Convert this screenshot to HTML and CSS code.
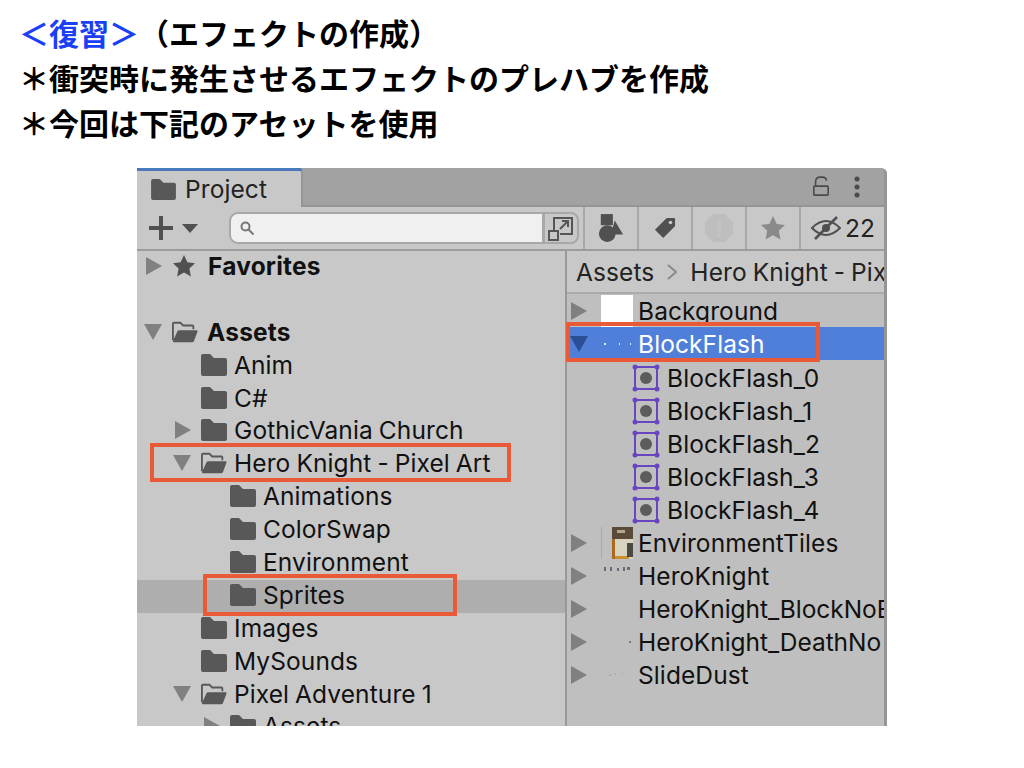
FILE: index.html
```html
<!DOCTYPE html>
<html lang="ja">
<head>
    <meta charset="UTF-8">
    <title>復習 エフェクトの作成</title>
    <link rel="stylesheet" href="styles.css">
</head>
<body>
    <!-- Shared icons -->
    <svg class="defs" width="0" height="0">
        <symbol id="folder" viewBox="0 0 26 22"><path d="M0 2q0-2 2-2h7l4 4h11q2 0 2 2v14q0 2-2 2H2q-2 0-2-2z" fill="#585858"/></symbol>
        <symbol id="folderOpen" viewBox="0 0 28 22"><path d="M1 20V2q0-1 1-1h7l3 3h10q1 0 1 1v3" fill="none" stroke="#585858" stroke-width="2"/><path d="M1 21l5-11q.5-1 2-1h18q2 0 1.500 1.500L24 20q-.5 2-2 2H2q-1 0-1-1z" fill="#585858"/></symbol>
        <symbol id="right" viewBox="0 0 16 18"><path d="M0 0l16 9-16 9z"/></symbol>
        <symbol id="down" viewBox="0 0 18 16"><path d="M0 0h18L9 16z"/></symbol>
        <symbol id="sprite" viewBox="0 0 28 28"><rect x="3" y="3" width="22" height="22" fill="none" stroke="#6a45c0" stroke-width="2"/><g fill="#6a45c0"><circle cx="3" cy="3" r="2.500"/><circle cx="25" cy="3" r="2.500"/><circle cx="3" cy="25" r="2.500"/><circle cx="25" cy="25" r="2.500"/></g><circle cx="14" cy="14" r="6" fill="#5c5c5c"/></symbol>
    </svg>

    <div class="heading">
        <p><span class="accent">＜復習＞</span>（エフェクトの作成）</p>
        <p>＊衝突時に発生させるエフェクトのプレハブを作成</p>
        <p>＊今回は下記のアセットを使用</p>
    </div>

    <div class="window">
        <!-- Tab bar -->
        <div class="tabbar">
            <div class="tab">
                <svg class="tab-icon"><use href="#folder"/></svg>
                <span>Project</span>
            </div>
            <div class="tabbar-tools">
                <svg width="18" height="22" viewBox="0 0 20 24"><path d="M4 10V6q0-5 5-5h2q5 0 5 4" fill="none" stroke="#4a4a4a" stroke-width="1.800"/><rect x="2" y="11" width="16" height="10" rx="1" fill="none" stroke="#4a4a4a" stroke-width="1.800"/></svg>
                <svg width="6" height="22" viewBox="0 0 6 22"><g fill="#4a4a4a"><circle cx="3" cy="3" r="2.500"/><circle cx="3" cy="11" r="2.500"/><circle cx="3" cy="19" r="2.500"/></g></svg>
            </div>
        </div>

        <!-- Toolbar -->
        <div class="toolbar">
            <div class="create">
                <svg width="26" height="26" viewBox="0 0 26 26"><path d="M13 1v24M1 13h24" stroke="#505050" stroke-width="4"/></svg>
                <svg width="16" height="9" viewBox="0 0 16 9"><path d="M0 0h16L8 9z" fill="#505050"/></svg>
            </div>
            <div class="search">
                <svg width="16" height="16" viewBox="0 0 16 16"><circle cx="6.500" cy="6.500" r="4" fill="none" stroke="#777" stroke-width="2"/><path d="M9.500 9.500l5 5" stroke="#777" stroke-width="2"/></svg>
            </div>
            <div class="search-btn">
                <svg width="26" height="26" viewBox="0 0 26 26"><path d="M6 16V3h18v16H12" fill="none" stroke="#555" stroke-width="2"/><rect x="1" y="16" width="9" height="9" fill="none" stroke="#555" stroke-width="2"/><path d="M12 14l8-8M14 6h6v6" fill="none" stroke="#555" stroke-width="2"/></svg>
            </div>
            <div class="tool">
                <svg width="26" height="30" viewBox="0 0 28 32"><rect x="3" y="1" width="13" height="12" fill="#505050"/><path d="M18 8l9 15H14z" fill="#505050"/><circle cx="10" cy="22" r="9" fill="#505050"/></svg>
            </div>
            <div class="tool">
                <svg width="22" height="22" viewBox="0 0 24 24"><path d="M1 14L13 2q1-1 2-1h7q1 0 1 1v7q0 1-1 2L10 23z" fill="#505050"/><circle cx="18" cy="6" r="2" fill="#c8c8c8"/></svg>
            </div>
            <div class="tool">
                <svg width="28" height="28" viewBox="0 0 28 28"><path d="M8 0h12l8 8v12l-8 8H8l-8-8V8z" fill="#bebebe"/><rect x="12" y="6" width="4" height="11" fill="#c3c3c3"/><rect x="12" y="19" width="4" height="4" fill="#c3c3c3"/></svg>
            </div>
            <div class="tool">
                <svg width="26" height="26" viewBox="0 0 24 24"><path d="M12 1l3.400 7.300 7.600.9-5.600 5.400 1.500 8L12 18.600 5.100 22.600l1.500-8L1 9.200l7.600-.9z" fill="#8a8a8a"/></svg>
            </div>
            <div class="tool tool-last">
                <svg width="30" height="26" viewBox="0 0 30 26"><path d="M1 13q14-14 28 0-14 14-28 0z" fill="none" stroke="#505050" stroke-width="2"/><circle cx="15" cy="13" r="4" fill="#505050"/><path d="M4 24L26 2" stroke="#505050" stroke-width="2.500"/></svg>
                <span>22</span>
            </div>
        </div>

        <div class="panes">
            <!-- Folder tree -->
            <div class="tree">
                <div class="row lvl0"><svg class="arrow"><use href="#right"/></svg><svg class="star" viewBox="0 0 24 24"><path d="M12 1l3.400 7.300 7.600.9-5.600 5.400 1.500 8L12 18.600 5.100 22.600l1.500-8L1 9.200l7.600-.9z" fill="#505050"/></svg><strong>Favorites</strong></div>
                <div class="row"></div>
                <div class="row lvl0"><svg class="arrow arrow-down"><use href="#down"/></svg><svg class="icon"><use href="#folderOpen"/></svg><strong>Assets</strong></div>
                <div class="row lvl1"><span class="arrow"></span><svg class="icon"><use href="#folder"/></svg>Anim</div>
                <div class="row lvl1"><span class="arrow"></span><svg class="icon"><use href="#folder"/></svg>C#</div>
                <div class="row lvl1"><svg class="arrow"><use href="#right"/></svg><svg class="icon"><use href="#folder"/></svg>GothicVania Church</div>
                <div class="row lvl1"><svg class="arrow arrow-down"><use href="#down"/></svg><svg class="icon"><use href="#folderOpen"/></svg>Hero Knight - Pixel Art</div>
                <div class="row lvl2"><span class="arrow"></span><svg class="icon"><use href="#folder"/></svg>Animations</div>
                <div class="row lvl2"><span class="arrow"></span><svg class="icon"><use href="#folder"/></svg>ColorSwap</div>
                <div class="row lvl2"><span class="arrow"></span><svg class="icon"><use href="#folder"/></svg>Environment</div>
                <div class="row lvl2 row-current"><span class="arrow"></span><svg class="icon"><use href="#folder"/></svg>Sprites</div>
                <div class="row lvl1"><span class="arrow"></span><svg class="icon"><use href="#folder"/></svg>Images</div>
                <div class="row lvl1"><span class="arrow"></span><svg class="icon"><use href="#folder"/></svg>MySounds</div>
                <div class="row lvl1"><svg class="arrow arrow-down"><use href="#down"/></svg><svg class="icon"><use href="#folderOpen"/></svg>Pixel Adventure 1</div>
                <div class="row lvl2"><svg class="arrow"><use href="#right"/></svg><svg class="icon"><use href="#folder"/></svg>Assets</div>
            </div>

            <!-- Asset list -->
            <div class="assets">
                <div class="crumbs">
                    <span>Assets</span>
                    <svg width="12" height="18" viewBox="0 0 12 18"><path d="M2 2l8 7-8 7" fill="none" stroke="#8a8a8a" stroke-width="2"/></svg>
                    <span>Hero Knight - Pix</span>
                </div>
                <div class="asset-row asset-first"><svg class="arrow"><use href="#right"/></svg><span class="thumb thumb-white"></span><span>Background</span></div>
                <div class="asset-row asset-selected"><svg class="arrow arrow-selected"><use href="#down"/></svg><svg class="thumb" viewBox="0 0 32 32"><g fill="#dfe8fa"><rect x="3" y="15" width="2" height="2"/><rect x="18" y="15" width="1" height="2"/><rect x="29" y="15" width="1" height="2"/></g></svg><span>BlockFlash</span></div>
                <div class="asset-row asset-sub"><svg class="sprite"><use href="#sprite"/></svg><span>BlockFlash_0</span></div>
                <div class="asset-row asset-sub"><svg class="sprite"><use href="#sprite"/></svg><span>BlockFlash_1</span></div>
                <div class="asset-row asset-sub"><svg class="sprite"><use href="#sprite"/></svg><span>BlockFlash_2</span></div>
                <div class="asset-row asset-sub"><svg class="sprite"><use href="#sprite"/></svg><span>BlockFlash_3</span></div>
                <div class="asset-row asset-sub"><svg class="sprite"><use href="#sprite"/></svg><span>BlockFlash_4</span></div>
                <div class="asset-row"><svg class="arrow"><use href="#right"/></svg><svg class="thumb" viewBox="0 0 32 32"><rect x="0" y="0" width="1" height="32" fill="#aaa"/><rect x="11" y="0" width="21" height="12" fill="#5a4a38"/><rect x="11" y="12" width="21" height="20" fill="#d8d2c0"/><rect x="11" y="12" width="3" height="20" fill="#a86a1c"/><rect x="14" y="29" width="14" height="3" fill="#c89030"/><rect x="26" y="16" width="6" height="14" fill="#4a4a40"/><rect x="16" y="3" width="8" height="3" fill="#b0a890"/></svg><span>EnvironmentTiles</span></div>
                <div class="asset-row"><svg class="arrow"><use href="#right"/></svg><svg class="thumb" viewBox="0 0 32 32"><g fill="#6a6a78"><rect x="3" y="7" width="2" height="4"/><rect x="9" y="7" width="2" height="4"/><rect x="16" y="8" width="2" height="3"/><rect x="22" y="7" width="2" height="4"/><rect x="26" y="7" width="3" height="3"/></g></svg><span>HeroKnight</span></div>
                <div class="asset-row"><svg class="arrow"><use href="#right"/></svg><span class="thumb"></span><span class="long-name">HeroKnight_BlockNoE</span></div>
                <div class="asset-row"><svg class="arrow"><use href="#right"/></svg><svg class="thumb" viewBox="0 0 32 32"><rect x="28" y="15" width="2" height="2" fill="#777"/></svg><span class="long-name">HeroKnight_DeathNo</span></div>
                <div class="asset-row"><svg class="arrow"><use href="#right"/></svg><svg class="thumb" viewBox="0 0 32 32"><g fill="#a8a8b8"><rect x="8" y="15" width="2" height="2"/><rect x="14" y="14" width="1" height="2"/><rect x="20" y="14" width="2" height="1"/></g></svg><span>SlideDust</span></div>
            </div>
        </div>

        <!-- Red annotation boxes -->
        <div class="mark mark-hero"></div>
        <div class="mark mark-sprites"></div>
        <div class="mark mark-flash"></div>
    </div>
</body>
</html>
```

FILE: styles.css
```css
/* General */
body {
    margin: 0;
    width: 1024px;
    height: 768px;
    overflow: hidden;
    background: #fff;
    color: #000;
    font-family: 'Noto Sans CJK JP', sans-serif;
}

.defs {
    position: absolute;
}

/* Heading text */
.heading {
    padding: 10px 0 0 19px;
    height: 168px;
    box-sizing: border-box;
    font-size: 30px;
    font-weight: 700;
    line-height: 45px;
}

.heading p {
    margin: 0;
    white-space: nowrap;
}

.accent {
    color: #1a3ff5;
}

/* Unity window */
.window {
    position: relative;
    width: 750px;
    height: 558px;
    overflow: hidden;
    margin-left: 137px;
    background: #c8c8c8;
    color: #111;
    font-family: 'Inter', sans-serif;
    font-size: 24.5px;
    letter-spacing: 0.1px;
    word-spacing: -1px;
    border-top-right-radius: 6px;
}

/* Tab bar */
.tabbar {
    display: flex;
    justify-content: space-between;
    height: 39px;
    box-sizing: border-box;
    background: #a2a2a2;
    border-bottom: 2px solid #959595;
    border-right: 3px solid #959595;
}

.tab {
    display: flex;
    align-items: center;
    gap: 9px;
    width: 166px;
    height: 39px;
    box-sizing: border-box;
    padding-left: 14px;
    background: #c8c8c8;
    border-top: 3px solid #4a78bd;
    border-right: 2px solid #959595;
    border-top-right-radius: 4px;
    color: #222;
}

.tab-icon {
    width: 25px;
    height: 21px;
}

.tabbar-tools {
    display: flex;
    align-items: center;
    gap: 24px;
    padding-right: 24px;
}

/* Toolbar */
.toolbar {
    display: flex;
    align-items: stretch;
    height: 44px;
    box-sizing: border-box;
    border-bottom: 2px solid #9c9c9c;
    border-right: 3px solid #959595;
}

.create {
    display: flex;
    align-items: center;
    gap: 8px;
    width: 92px;
    padding-left: 11px;
    box-sizing: border-box;
}

.search {
    display: flex;
    align-items: center;
    width: 314px;
    height: 32px;
    margin-top: 5px;
    padding-left: 8px;
    box-sizing: border-box;
    background: #f0f0f0;
    border: 2px solid #a8a8a8;
    border-right-width: 1px;
    border-radius: 9px 0 0 9px;
}

.search-btn {
    display: flex;
    align-items: center;
    justify-content: center;
    width: 36px;
    height: 32px;
    margin-top: 5px;
    box-sizing: border-box;
    border: 2px solid #a8a8a8;
    border-radius: 0 8px 8px 0;
}

.tool {
    display: flex;
    align-items: center;
    justify-content: center;
    width: 54px;
    box-sizing: border-box;
    border-left: 2px solid #a8a8a8;
}

.search-btn + .tool {
    margin-left: 4px;
}

.tool-last {
    flex: 1;
    justify-content: flex-end;
    gap: 4px;
    padding-right: 9px;
    color: #222;
}

/* Panes */
.panes {
    display: flex;
    height: 475px;
}

.tree {
    width: 428px;
    flex-shrink: 0;
    overflow: hidden;
    border-right: 2px solid #999;
}

.row {
    display: flex;
    align-items: center;
    height: 32.9px;
    box-sizing: border-box;
    padding-bottom: 3px;
    white-space: nowrap;
}

.row strong {
    font-weight: 700;
    letter-spacing: 0.2px;
}

.lvl0 { padding-left: 9px; }
.lvl1 { padding-left: 38px; }
.lvl2 { padding-left: 67px; }

.lvl0 .icon {
    margin-right: 9px;
}

.row-current {
    background: #aeaeae;
}

.arrow {
    display: block;
    flex-shrink: 0;
    width: 16px;
    height: 18px;
    margin-right: 10px;
    fill: #808080;
}

.arrow-down {
    width: 18px;
    height: 16px;
    margin-left: -2px;
}

.icon {
    flex-shrink: 0;
    width: 26px;
    height: 22px;
    margin-right: 7px;
}

.star {
    flex-shrink: 0;
    width: 24px;
    height: 24px;
    margin-right: 12px;
}

/* Asset list */
.assets {
    flex: 1;
    min-width: 0;
    overflow: hidden;
    background: #bfbfbf;
    border-right: 3px solid #959595;
}

.crumbs {
    display: flex;
    align-items: center;
    gap: 12px;
    height: 41px;
    padding-left: 9px;
    background: #c8c8c8;
    border-bottom: 2px solid #aaa;
    white-space: nowrap;
    color: #222;
}

.crumbs svg {
    flex-shrink: 0;
}

.asset-row {
    display: flex;
    align-items: center;
    height: 33.2px;
    box-sizing: border-box;
    padding-left: 4px;
    white-space: nowrap;
}

.asset-row .arrow {
    margin-right: 14px;
}

.asset-first {
    height: 32.8px;
    padding-top: 2px;
}

.asset-selected {
    padding-top: 2px;
    background: #4f7fd9;
    color: #fff;
}

.asset-selected .arrow {
    width: 18px;
    margin-left: -1px;
    margin-right: 13px;
}

.arrow-selected {
    fill: #2a4f94;
}

.thumb {
    display: block;
    flex-shrink: 0;
    width: 32px;
    height: 32px;
    margin-right: 5px;
}

.thumb-white {
    background: #fff;
}

.asset-sub {
    padding-left: 65px;
    padding-top: 2px;
}

.sprite {
    flex-shrink: 0;
    width: 28px;
    height: 28px;
    margin-right: 7px;
}

.long-name {
    letter-spacing: -0.05px;
}

/* Annotation boxes */
.mark {
    position: absolute;
    box-sizing: border-box;
    border: 4px solid #ea5a36;
}

.mark-hero {
    left: 13px;
    top: 275px;
    width: 361px;
    height: 39px;
}

.mark-sprites {
    left: 66px;
    top: 406px;
    width: 254px;
    height: 42px;
}

.mark-flash {
    left: 429px;
    top: 154px;
    width: 254px;
    height: 40px;
}
```
